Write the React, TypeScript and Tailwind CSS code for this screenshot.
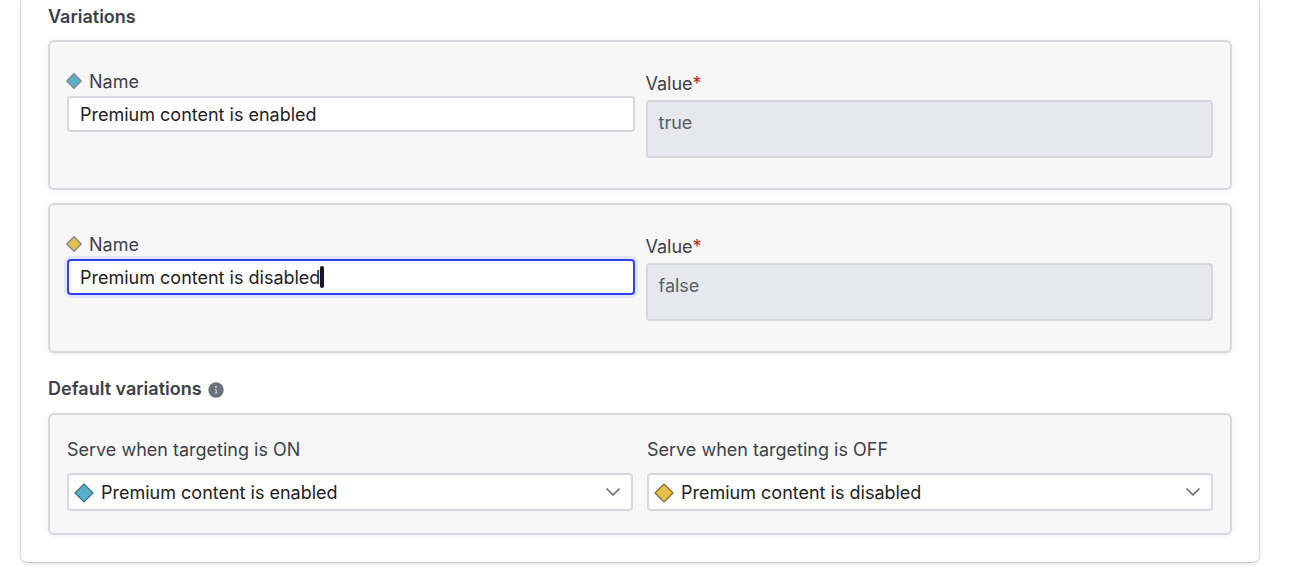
type Tone = "blue" | "yellow";

const tones: Record<Tone, { fill: string; stroke: string }> = {
  blue: { fill: "#58b0cb", stroke: "#3c6f80" },
  yellow: { fill: "#e6c14f", stroke: "#80692a" },
};

function Diamond({ tone, soft, className }: { tone: Tone; soft?: boolean; className: string }) {
  return (
    <svg viewBox="0 0 20 20" className={className} aria-hidden="true">
      <path
        d="M10 1 19 10 10 19 1 10Z"
        fill={tones[tone].fill}
        stroke={soft ? "#85898b" : tones[tone].stroke}
        strokeWidth={soft ? 1.8 : 1.1}
        strokeLinejoin="round"
      />
    </svg>
  );
}

const cardClass = "rounded-md border-2 border-[#d6d8de] bg-[#f7f7f7] px-[17px] shadow-[0_1px_4px_rgba(60,70,90,0.1)]";

function VariationCard({ id, tone, name, value, active }: { id: string; tone: Tone; name: string; value: string; active?: boolean }) {
  return (
    <div className={`${cardClass} grid grid-cols-2 gap-x-[11px] pt-7 pb-[30px]`}>
      <div>
        <label htmlFor={`${id}-name`} className="flex h-[26px] items-center pb-0.5 text-[#3d3f49]">
          <Diamond tone={tone} soft className="-ml-px mr-[7px] mb-0.5 size-4" />
          Name
        </label>
        <div className="relative">
          <input
            id={`${id}-name`}
            defaultValue={name}
            className={
              active
                ? "block h-9 w-full rounded border-2 border-[#2d42ee] bg-white px-[11px] text-[#1f2024] caret-transparent shadow-[0_0_0_3px_#e3e6f7] outline-none"
                : "block h-9 w-full rounded border-2 border-[#d6d7de] bg-white px-[11px] text-[#1f2024] outline-none"
            }
          />
          {active && <span className="absolute top-[7px] left-[253px] h-[22px] w-1 rounded-sm bg-[#17181b]" />}
        </div>
      </div>
      <div>
        <label htmlFor={`${id}-value`} className="flex h-[30px] items-center pb-0.5 text-[#3d3f49]">
          Value<span className="text-[#b5301c]">*</span>
        </label>
        <textarea
          id={`${id}-value`}
          disabled
          rows={1}
          defaultValue={value}
          className="block h-[58px] w-full resize-none rounded border-2 border-[#d6d7de] bg-[#e7e8ee] px-[11px] py-[9px] leading-6 text-[#5b5d69]"
        />
      </div>
    </div>
  );
}

function ServeSelect({ id, label, tone, value }: { id: string; label: string; tone: Tone; value: string }) {
  return (
    <div>
      <label htmlFor={id} className="flex h-8 items-center text-[#3d3f49]">
        {label}
      </label>
      <div className="relative mt-[7px]">
        <select
          id={id}
          defaultValue={value}
          className="block h-[38px] w-full appearance-none rounded border-2 border-[#d6d7de] bg-white pt-0.5 pr-10 pl-8 text-[#1f2024] outline-none"
        >
          <option>Premium content is enabled</option>
          <option>Premium content is disabled</option>
        </select>
        <Diamond tone={tone} className="pointer-events-none absolute top-2.5 left-[7px] size-5" />
        <svg viewBox="0 0 14 8" className="pointer-events-none absolute top-[15px] right-[13px] h-2 w-3.5" fill="none" aria-hidden="true">
          <path d="M1 1l6 6 6-6" stroke="#6c6f7c" strokeWidth="1.7" strokeLinecap="round" strokeLinejoin="round" />
        </svg>
      </div>
    </div>
  );
}

export default function App() {
  return (
    <div className="bg-white pr-8 pb-2.5 pl-5 font-['Inter','Liberation_Sans',sans-serif] text-lg">
      <main className="rounded-b-lg border border-t-0 border-[#dcdde0] border-b-[#cbccd0] px-[27px] pb-[27px] shadow-[0_2px_4px_rgba(0,0,0,0.1)]">
        <h2 className="flex h-10 items-start pt-[3px] leading-7 font-semibold text-[#3d3f49]">Variations</h2>
        <div className="flex flex-col gap-[13px]">
          <VariationCard id="enabled" tone="blue" name="Premium content is enabled" value="true" />
          <VariationCard id="disabled" tone="yellow" name="Premium content is disabled" value="false" active />
        </div>
        <h2 className="mt-[22px] mb-2.5 flex items-center gap-1.5 leading-7 font-semibold text-[#3d3f49]">
          Default variations
          <svg viewBox="0 0 16 16" className="mt-0.5 size-4" aria-hidden="true">
            <circle cx="8" cy="8" r="7.7" fill="#6c6f7c" />
            <circle cx="8" cy="5" r="0.9" fill="#e4e5e9" />
            <path d="M6.9 7.4H8.2V11M6.8 11.1H9.4" fill="none" stroke="#d5d6dc" strokeWidth="1" />
          </svg>
        </h2>
        <div className={`${cardClass} grid grid-cols-2 gap-x-3.5 pt-[19px] pb-[22px]`}>
          <ServeSelect id="serve-on" label="Serve when targeting is ON" tone="blue" value="Premium content is enabled" />
          <ServeSelect id="serve-off" label="Serve when targeting is OFF" tone="yellow" value="Premium content is disabled" />
        </div>
      </main>
    </div>
  );
}
